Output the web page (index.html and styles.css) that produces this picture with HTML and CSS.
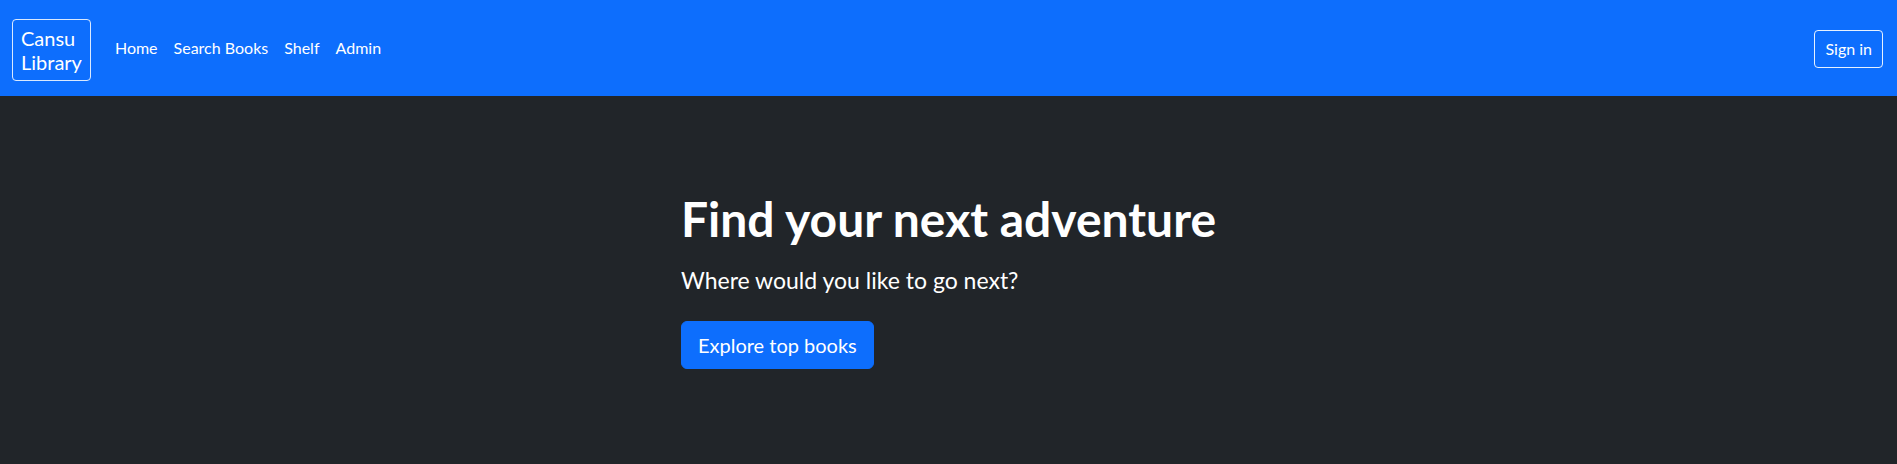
FILE: index.html
```html
<!DOCTYPE html>
<html lang="en">
<head>
<meta charset="utf-8">
<title>Cansu Library</title>
<link rel="stylesheet" href="styles.css">
</head>
<body>
<nav class="navbar">
  <div class="nav-left">
    <a class="brand" href="#">Cansu<br>Library</a>
    <ul class="nav-links">
      <li><a href="#">Home</a></li>
      <li><a href="#">Search Books</a></li>
      <li><a href="#">Shelf</a></li>
      <li><a href="#">Admin</a></li>
    </ul>
  </div>
  <a class="btn-signin" href="#">Sign in</a>
</nav>
<section class="hero">
  <div class="hero-inner">
    <h1 class="hero-title">Find your next adventure</h1>
    <p class="hero-sub">Where would you like to go next?</p>
    <a class="btn-explore" href="#">Explore top books</a>
  </div>
</section>
</body>
</html>
```

FILE: styles.css
```css
* { box-sizing: border-box; }
html, body {
  margin: 0;
  padding: 0;
  height: 100%;
}
body {
  font-family: Lato, "Liberation Sans", sans-serif;
  background: #212529;
  color: #fff;
}
a { text-decoration: none; color: inherit; }

.navbar {
  height: 96px;
  background: #0d6efd;
  display: flex;
  align-items: center;
  justify-content: space-between;
  padding: 0 14px 0 12px;
}
.nav-left {
  display: flex;
  align-items: center;
}
.brand {
  display: block;
  font-size: 20px;
  line-height: 24px;
  padding: 6px 8px;
  border: 1px solid rgba(255,255,255,0.85);
  border-radius: 4px;
  margin-right: 16px;
  color: #fff;
  margin-top: 3px;
}
.nav-links {
  list-style: none;
  margin: 0;
  padding: 0;
  display: flex;
}
.nav-links a {
  display: block;
  padding: 8px;
  font-size: 16px;
  line-height: 24px;
  color: #fff;
}
.btn-signin {
  display: block;
  font-size: 16px;
  line-height: 24px;
  padding: 6px 10px;
  border: 1px solid rgba(255,255,255,0.9);
  border-radius: 4px;
  color: #fff;
  margin-top: 1px;
}

.hero {
  background: #212529;
  height: 368px;
  padding-top: 94px;
  display: flex;
  justify-content: center;
  align-items: flex-start;
}
.hero-inner {
  display: flex;
  flex-direction: column;
  align-items: flex-start;
}
.hero-title {
  margin: 0 0 15px 0;
  font-size: 48px;
  line-height: 57.6px;
  font-weight: 700;
  white-space: nowrap;
}
.hero-sub {
  margin: 0 0 24px 0;
  font-size: 23px;
  line-height: 34.5px;
}
.btn-explore {
  display: inline-block;
  background: #0d6efd;
  color: #fff;
  font-size: 20px;
  line-height: 30px;
  padding: 8px 16px;
  border: 1px solid #0d6efd;
  border-radius: 6px;
}
```
